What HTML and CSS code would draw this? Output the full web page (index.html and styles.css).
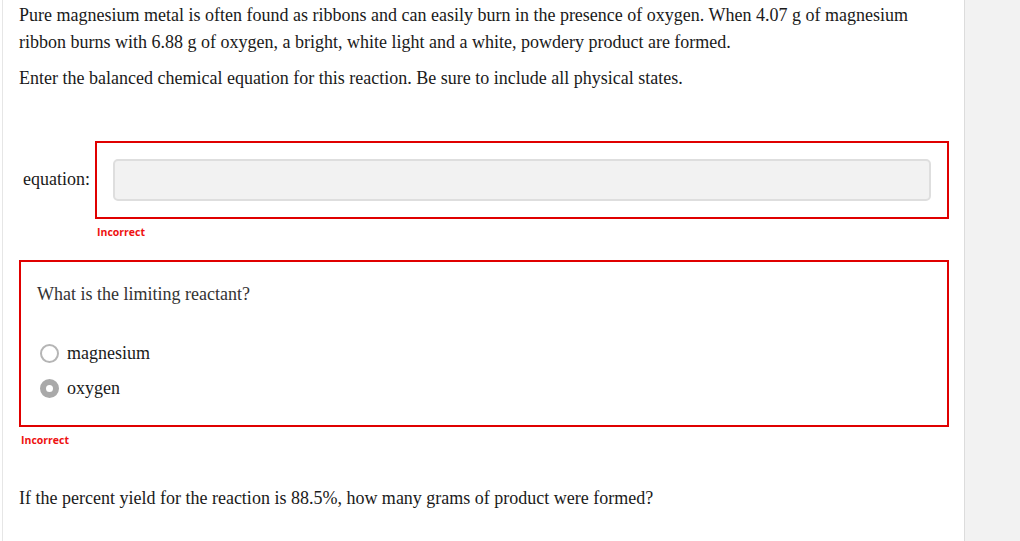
FILE: index.html
```html
<!DOCTYPE html>
<html>
<head>
<meta charset="utf-8">
<link rel="stylesheet" href="styles.css">
</head>
<body>
<div class="page">
  <main class="panel">
    <p class="text">Pure magnesium metal is often found as ribbons and can easily burn in the presence of oxygen. When 4.07 g of magnesium ribbon burns with 6.88 g of oxygen, a bright, white light and a white, powdery product are formed.</p>
    <p class="text">Enter the balanced chemical equation for this reaction. Be sure to include all physical states.</p>

    <div class="eq-row">
      <label class="eq-label">equation:</label>
      <div class="eq-box">
        <div class="eq-input"></div>
      </div>
    </div>
    <div class="incorrect incorrect-eq">Incorrect</div>

    <div class="mc-box">
      <p class="mc-question">What is the limiting reactant?</p>
      <div class="options">
        <div class="option"><span class="radio"></span><span class="opt-label">magnesium</span></div>
        <div class="option"><span class="radio checked"></span><span class="opt-label">oxygen</span></div>
      </div>
    </div>
    <div class="incorrect incorrect-mc">Incorrect</div>

    <p class="text last">If the percent yield for the reaction is 88.5%, how many grams of product were formed?</p>
  </main>
  <aside class="sidebar"></aside>
</div>
</body>
</html>
```

FILE: styles.css
```css
* { box-sizing: border-box; }
html, body {
  margin: 0;
  padding: 0;
  background: #ffffff;
  height: 100%;
}
.page {
  display: flex;
  height: 541px;
  overflow: hidden;
  padding-left: 2px;
}
.panel {
  width: 962px;
  flex: none;
  border-left: 1px solid #e6e6e6;
  padding: 2px 15px 0 16px;
  font-family: "Liberation Serif", "Times New Roman", serif;
  font-size: 18px;
  color: #1a1a1a;
}
.sidebar {
  flex: 1;
  background: #f2f2f2;
  border-left: 1px solid #dcdcdc;
}
.text {
  margin: 0 0 9px 0;
  line-height: 27px;
}
.eq-row {
  display: flex;
  align-items: center;
  margin-top: 49px;
}
.eq-label {
  width: 76px;
  flex: none;
  text-align: right;
  padding-right: 5px;
  line-height: 27px;
  padding-bottom: 2px;
}
.eq-box {
  flex: 1;
  border: 2px solid #e00000;
  padding: 16px;
}
.eq-input {
  height: 42px;
  background: #f2f2f2;
  border: 2px solid #dedede;
  border-radius: 5px;
}
.incorrect {
  font-family: "Open Sans", "Noto Sans", sans-serif;
  font-weight: 700;
  font-size: 10.5px;
  line-height: 13px;
  color: #ee1111;
}
.incorrect-eq {
  margin: 7px 0 0 78px;
}
.mc-box {
  margin-top: 21px;
  border: 2px solid #e00000;
  padding: 19px 16px 19px 16px;
}
.mc-question {
  margin: 0;
  line-height: 27px;
  color: #333;
}
.options {
  margin-top: 28px;
}
.option {
  display: flex;
  align-items: center;
  height: 35px;
  line-height: 27px;
}
.radio {
  width: 19px;
  height: 19px;
  border-radius: 50%;
  border: 2px solid #b5b5b5;
  background: #fff;
  flex: none;
  margin-left: 3px;
  margin-right: 8px;
}
.radio.checked {
  border: 6px solid #a9a9a9;
  background: #fff;
}
.opt-label {
  color: #1a1a1a;
}
.incorrect-mc {
  margin: 7px 0 0 2px;
}
.text.last {
  margin-top: 38px;
}
```
